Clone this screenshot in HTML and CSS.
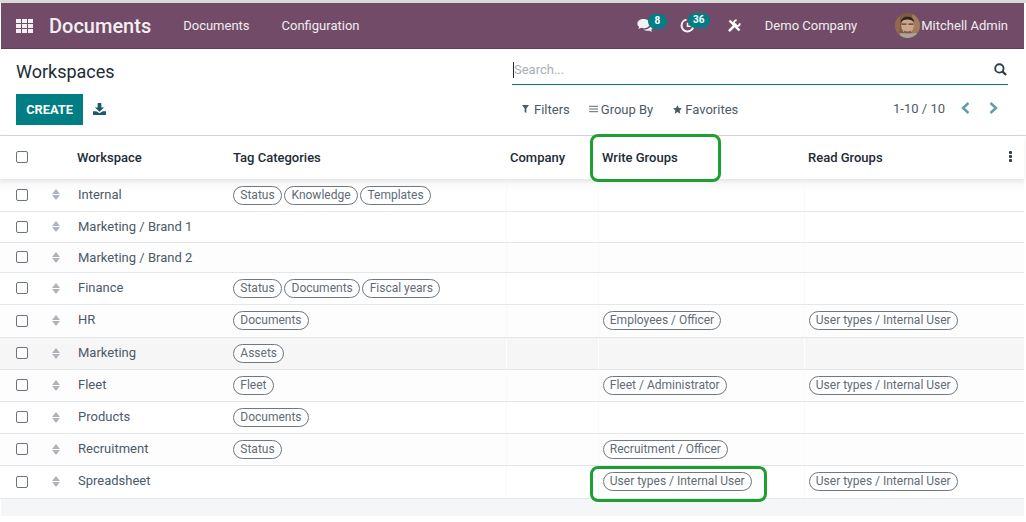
FILE: index.html
```html
<!DOCTYPE html>
<html lang="en">
<head>
<meta charset="utf-8">
<title>Workspaces - Documents</title>
<link rel="stylesheet" href="styles.css">
</head>
<body>
<div class="page">
  <header class="navbar">
    <svg class="apps" viewBox="0 0 17 14" width="17" height="14"><g fill="#f3eef2"><rect x="0" y="0" width="5" height="4"/><rect x="6" y="0" width="5" height="4"/><rect x="12" y="0" width="5" height="4"/><rect x="0" y="5" width="5" height="4"/><rect x="6" y="5" width="5" height="4"/><rect x="12" y="5" width="5" height="4"/><rect x="0" y="10" width="5" height="4"/><rect x="6" y="10" width="5" height="4"/><rect x="12" y="10" width="5" height="4"/></g></svg>
    <span class="brand">Documents</span>
    <nav class="menu"><span>Documents</span><span>Configuration</span></nav>
    <div class="systray">
      <span class="tray tray-chat">
        <svg viewBox="0 0 18 15" width="17" height="14"><path fill="#f4f1f3" d="M7 0C3.200 0 .3 2.200.3 5c0 1.400.8 2.600 1.900 3.500-.2.900-.8 1.700-1.500 2.300 1.400-.1 2.700-.6 3.700-1.300.8.200 1.700.3 2.600.3 3.800 0 6.700-2.200 6.700-4.800S10.800 0 7 0z"/><path fill="#f4f1f3" d="M15 5.500c.1 3.300-3.300 5.800-7.300 5.800h-.9c1.200.9 2.800 1.400 4.500 1.400.7 0 1.300-.1 1.900-.2.800.6 1.800 1 3 1.100-.6-.5-1-1.100-1.200-1.800 1.200-.8 1.900-1.900 1.900-3.100 0-1.200-.7-2.300-1.900-3.200z"/></svg>
        <b class="badge badge-chat">8</b>
      </span>
      <span class="tray tray-clock">
        <svg viewBox="0 0 16 16" width="15" height="15"><path fill="none" stroke="#f4f1f3" stroke-width="2.200" d="M7 1.800a6.300 6.300 0 1 0 7.200 7"/><path fill="none" stroke="#f4f1f3" stroke-width="1.600" d="M8 5v3.800H11.500"/></svg>
        <b class="badge badge-clock">36</b>
      </span>
      <svg class="tools" viewBox="0 0 14 14" width="13" height="13"><path stroke="#fff" stroke-width="2.600" fill="none" d="M1.600 1.600 12.400 12.400"/><path stroke="#fff" stroke-width="2.800" stroke-linecap="round" fill="none" d="M1.800 12.200 8 6"/><path stroke="#fff" stroke-width="2" fill="none" d="M9.300 1.200A3.200 3.200 0 1 0 12.800 4.700"/></svg>
      <span class="company">Demo Company</span>
      <svg class="avatar" viewBox="0 0 26 26" width="25" height="25"><defs><clipPath id="face-clip"><circle cx="13" cy="13" r="13"/></clipPath></defs><g clip-path="url(#face-clip)"><rect width="26" height="26" fill="#7d5c44"/><rect x="18" y="0" width="8" height="26" fill="#a37c5b"/><rect x="0" y="0" width="5" height="26" fill="#94694a"/><rect x="5" y="21" width="19" height="5" fill="#a9a59c"/><ellipse cx="13" cy="13" rx="6.500" ry="8.500" fill="#cfa48c"/><path d="M6 10C6 2 20 2 20 10 18 7 14 6.500 11 7 9 7.300 7 8 6 10z" fill="#2c231e"/><path d="M7 11.500h5M14 11.500h5" stroke="#4a3d36" stroke-width="1.200"/><path d="M9 18q4 2.500 8 0l-1 3h-6z" fill="#80584a"/></g></svg>
      <span class="user">Mitchell Admin</span>
    </div>
  </header>

  <section class="control">
    <div class="control-left">
      <h1 class="title">Workspaces</h1>
      <div class="actions">
        <button class="create">CREATE</button>
        <svg class="download" viewBox="0 0 14 13" width="13" height="12"><path fill="#1b5a6e" d="M5 0h4v5h3L7 9.500 2 5h3z"/><path fill="#1b5a6e" d="M0 9h3.500L7 11l3.500-2H14v4H0z"/></svg>
      </div>
    </div>
    <div class="control-right">
      <div class="search">
        <span class="caret"></span><span class="placeholder">Search...</span>
        <svg class="search-icon" viewBox="0 0 14 14" width="13" height="13"><circle cx="5.800" cy="5.800" r="4.500" fill="none" stroke="#2f3d4a" stroke-width="2"/><path d="M9 9l4 4" stroke="#2f3d4a" stroke-width="2.400"/></svg>
      </div>
      <div class="tools-row">
        <div class="filters">
          <span class="filter f1"><svg viewBox="0 0 8 9" width="7" height="8"><path fill="#4c5a68" d="M0 0h8L5 4v5L3 8V4z"/></svg>Filters</span>
          <span class="filter"><svg viewBox="0 0 10 8" width="9" height="8"><path stroke="#4c5a68" stroke-width="1" d="M0 1h10M0 4h10M0 7h10"/></svg>Group By</span>
          <span class="filter f3"><svg viewBox="0 0 10 10" width="9" height="9"><path fill="#4c5a68" d="M5 0l1.500 3.300 3.500.4-2.600 2.400.7 3.600L5 7.900 1.900 9.700l.7-3.600L0 3.700l3.500-.4z"/></svg>Favorites</span>
        </div>
        <div class="pager">
          <span class="count">1-10 / 10</span>
          <svg viewBox="0 0 9 12" width="9" height="12"><path fill="none" stroke="#5f9ea6" stroke-width="2.400" d="M7.500 1 2 6l5.500 5"/></svg>
          <svg class="next" viewBox="0 0 9 12" width="9" height="12"><path fill="none" stroke="#5f9ea6" stroke-width="2.400" d="M1.500 1 7 6l-5.500 5"/></svg>
        </div>
      </div>
    </div>
  </section>

  <div class="table-wrap">
    <table class="list">
      <colgroup><col class="c-check"><col class="c-handle"><col class="c-name"><col class="c-tags"><col class="c-company"><col class="c-write"><col class="c-read"><col class="c-opt"></colgroup>
      <thead>
        <tr class="head"><th><span class="check"></span></th><th></th><th>Workspace</th><th>Tag Categories</th><th>Company</th><th>Write Groups</th><th>Read Groups</th><th class="opt"><svg viewBox="0 0 3 11" width="3" height="11"><g fill="#2f3d4a"><rect width="3" height="3" rx="1"/><rect y="4" width="3" height="3" rx="1"/><rect y="8" width="3" height="3" rx="1"/></g></svg></th></tr>
      </thead>
      <tbody>
        <tr class="h32 first"><td><span class="check"></span></td><td><span class="handle"></span></td><td>Internal</td><td><span class="tag">Status</span><span class="tag">Knowledge</span><span class="tag">Templates</span></td><td></td><td></td><td></td><td></td></tr>
        <tr class="h31"><td><span class="check"></span></td><td><span class="handle"></span></td><td>Marketing / Brand 1</td><td></td><td></td><td></td><td></td><td></td></tr>
        <tr class="h30"><td><span class="check"></span></td><td><span class="handle"></span></td><td>Marketing / Brand 2</td><td></td><td></td><td></td><td></td><td></td></tr>
        <tr class="h32"><td><span class="check"></span></td><td><span class="handle"></span></td><td>Finance</td><td><span class="tag">Status</span><span class="tag">Documents</span><span class="tag">Fiscal years</span></td><td></td><td></td><td></td><td></td></tr>
        <tr class="h33"><td><span class="check"></span></td><td><span class="handle"></span></td><td>HR</td><td><span class="tag">Documents</span></td><td></td><td><span class="tag">Employees / Officer</span></td><td><span class="tag">User types / Internal User</span></td><td></td></tr>
        <tr class="h32 hover"><td><span class="check"></span></td><td><span class="handle"></span></td><td>Marketing</td><td><span class="tag">Assets</span></td><td></td><td></td><td></td><td></td></tr>
        <tr class="h32"><td><span class="check"></span></td><td><span class="handle"></span></td><td>Fleet</td><td><span class="tag">Fleet</span></td><td></td><td><span class="tag">Fleet / Administrator</span></td><td><span class="tag">User types / Internal User</span></td><td></td></tr>
        <tr class="h32"><td><span class="check"></span></td><td><span class="handle"></span></td><td>Products</td><td><span class="tag">Documents</span></td><td></td><td></td><td></td><td></td></tr>
        <tr class="h32"><td><span class="check"></span></td><td><span class="handle"></span></td><td>Recruitment</td><td><span class="tag">Status</span></td><td></td><td><span class="tag">Recruitment / Officer</span></td><td></td><td></td></tr>
        <tr class="h33"><td><span class="check"></span></td><td><span class="handle"></span></td><td>Spreadsheet</td><td></td><td></td><td><span class="tag">User types / Internal User</span></td><td><span class="tag">User types / Internal User</span></td><td></td></tr>
      </tbody>
    </table>
    <div class="table-foot"></div>
  </div>

  <div class="mark mark-head"></div>
  <div class="mark mark-cell"></div>
</div>
</body>
</html>
```

FILE: styles.css
```css
* { box-sizing: border-box; }
html, body { margin: 0; padding: 0; background: #fff; }
body { width: 1026px; height: 522px; overflow: hidden; font-family: Roboto, "Liberation Sans", sans-serif; color: #4c5a68; }
.page { position: relative; width: 1026px; height: 522px; padding-top: 3px; background: #fff; }
.page::before { content: ""; position: absolute; left: 0; top: 0; width: 100%; height: 3px; background: #d9d9d9; }

.navbar { display: flex; align-items: center; height: 46px; margin: 0 2px 0 1px; background: #714b67; color: #f1ecf0; border-bottom: 1px solid #5d3f55; padding-left: 15px; font-size: 13px; }
.apps { flex: none; }
.brand { margin-left: 16px; font-size: 20px; font-weight: 500; color: #f3eef2; }
.menu { display: flex; gap: 32px; margin-left: 32px; }
.systray { display: flex; align-items: center; margin-left: auto; height: 100%; }
.tray { position: relative; display: flex; align-items: center; }
.tray-chat { width: 17px; margin-right: 26px; }
.tray-clock { width: 15px; margin-right: 33px; }
.badge { position: absolute; display: block; top: -5px; height: 15px; line-height: 14px; border-radius: 8px; background: #017e84; color: #fff; font-size: 10px; font-weight: 700; text-align: center; }
.badge-chat { left: 11px; width: 19px; }
.badge-clock { left: 8px; width: 22px; }
.tools { flex: none; }
.company { margin-left: 24px; }
.avatar { flex: none; margin-left: 38px; }
.user { margin-left: 1px; margin-right: 16px; }

.control { display: flex; height: 86px; padding: 0 18px 0 16px; }
.control-left { width: 496px; }
.title { margin: 12px 0 0; font-size: 18px; font-weight: 400; line-height: 21px; color: #212b36; }
.actions { display: flex; align-items: center; gap: 10px; margin-top: 12px; }
.create { width: 67px; height: 31px; border: 0; padding: 0; background: #017e84; color: #fff; font: 700 12.8px Roboto, sans-serif; }
.download { margin-top: -2px; }
.control-right { width: 496px; }
.search { display: flex; align-items: center; height: 27px; margin-top: 9px; border-bottom: 1px solid #017e84; padding: 0 1px 3px 1px; font-size: 13px; }
.caret { width: 1px; height: 16px; background: #212b36; }
.placeholder { color: #a9b0b8; }
.search-icon { margin-left: auto; }
.tools-row { display: flex; justify-content: space-between; align-items: center; height: 20px; margin-top: 14px; padding-left: 10px; font-size: 13px; }
.filters { display: flex; gap: 19px; }
.filter { display: flex; align-items: center; gap: 3px; }
.f1 { gap: 5px; }
.f3 { margin-left: 1px; }
.pager { display: flex; align-items: center; gap: 17px; padding-right: 10px; font-size: 13px; margin-top: -2px; }
.count { margin-right: -1px; }
.next { margin-left: 2px; }

.table-wrap { position: relative; border-top: 1px solid #d5d5d5; }
.list { table-layout: fixed; width: 1024px; border-collapse: collapse; font-size: 13px; }
.c-check { width: 44px; } .c-handle { width: 29px; } .c-name { width: 156px; } .c-tags { width: 277px; }
.c-company { width: 92px; } .c-write { width: 206px; } .c-read { width: 199px; } .c-opt { width: 21px; }
.list th { padding: 0 0 0 4px; text-align: left; font-weight: 500; color: #212b36; }
.head { height: 43px; box-shadow: 0 2px 4px rgba(0,0,0,0.07); position: relative; }
.head .check { margin-bottom: 2px; }
.list td { padding: 0 0 0 4px; border-bottom: 1px solid #e4e6e8; vertical-align: middle; white-space: nowrap; overflow: hidden; }
.list td:nth-child(5), .list td:nth-child(6), .list td:nth-child(7) { border-left: 1px solid #f9f9f9; }
.list tr.hover td:nth-child(5), .list tr.hover td:nth-child(6), .list tr.hover td:nth-child(7) { border-left-color: #fff; }
.list th:first-child, .list td:first-child { padding-left: 16px; }
.list td:nth-child(2) { padding-left: 8px; }
.list td:nth-child(3) { padding: 0 0 1px 5px; }
.list .h30 td:nth-child(3) { padding-bottom: 0; }
.list .h33 td:nth-child(3) { padding-bottom: 3px; }
.list th.opt { padding-left: 6px; }
.h30 { height: 30px; } .h31 { height: 31px; } .h32 { height: 32px; } .h33 { height: 33px; }
.first td { background: linear-gradient(#f5f5f5, #fff 12px); }
.list tbody tr:nth-child(2n+3) td { background: #fdfdfd; }
.list tbody tr.hover td { background: #f6f6f6; }
.check { display: block; width: 12px; height: 12px; border: 1px solid #6b7280; border-radius: 2px; background: #fff; }
.handle { display: block; position: relative; width: 8px; height: 11px; }
.handle::before, .handle::after { content: ""; position: absolute; left: 0; border-left: 4px solid transparent; border-right: 4px solid transparent; }
.handle::before { top: 0; border-bottom: 5px solid #aeb4bc; }
.handle::after { bottom: 0; border-top: 5px solid #aeb4bc; }
.tag { display: inline-block; height: 19px; line-height: 16px; margin-right: 2.3px; padding: 0 6.3px; border: 1px solid #6f7780; border-radius: 10px; font-size: 12px; color: #5f6b76; background: #fff; vertical-align: middle; }
.tag:last-child { margin-right: 0; }
.first .tag { margin-top: 2px; }
.table-foot { height: 17px; background: #f5f6f8; margin: 0 2px 0 1px; }

.mark { position: absolute; border: 3px solid #1f9e32; border-radius: 8px; pointer-events: none; }
.mark-head { left: 590px; top: 134px; width: 131px; height: 48px; }
.mark-cell { left: 590px; top: 466px; width: 177px; height: 36px; }
```
